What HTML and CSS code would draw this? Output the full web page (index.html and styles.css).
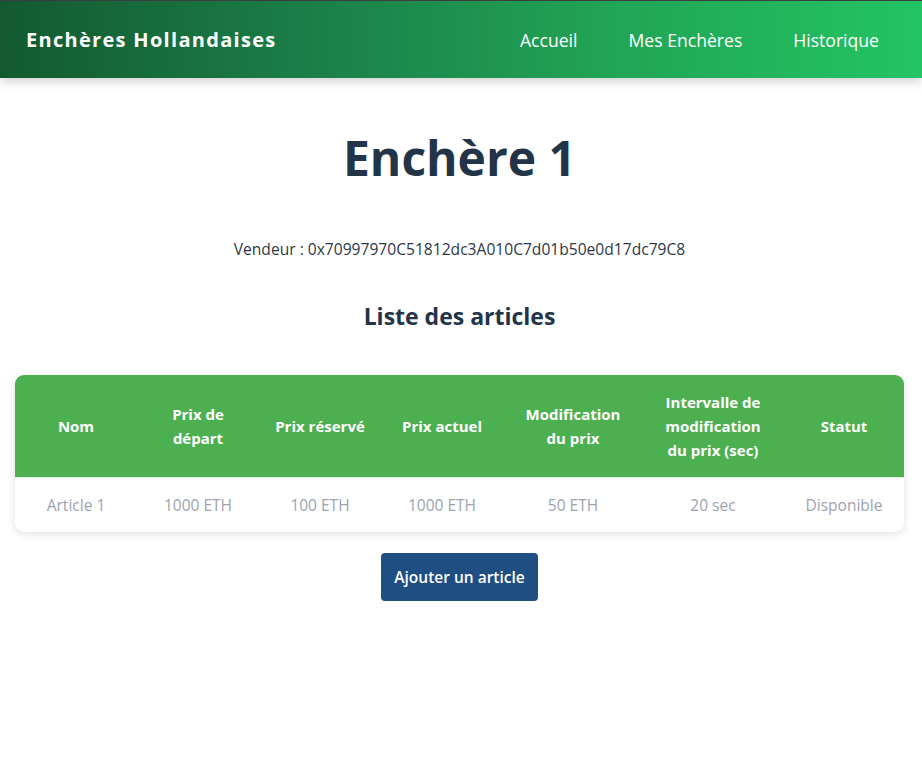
FILE: index.html
```html
<!DOCTYPE html>
<html lang="fr">
<head>
<meta charset="utf-8">
<title>Enchère 1</title>
<link rel="stylesheet" href="styles.css">
</head>
<body>
<header class="navbar">
  <div class="brand">Enchères Hollandaises</div>
  <nav class="links">
    <a href="#">Accueil</a>
    <a href="#">Mes Enchères</a>
    <a href="#">Historique</a>
  </nav>
</header>
<main class="content">
  <h1 class="title">Enchère 1</h1>
  <p class="seller">Vendeur : 0x70997970C51812dc3A010C7d01b50e0d17dc79C8</p>
  <h2 class="subtitle">Liste des articles</h2>
  <div class="table-card">
    <table class="items">
      <colgroup>
        <col class="c-a"><col class="c-a"><col class="c-a"><col class="c-a"><col class="c-b"><col class="c-b"><col class="c-a">
      </colgroup>
      <thead>
        <tr>
          <th>Nom</th>
          <th>Prix de départ</th>
          <th>Prix réservé</th>
          <th>Prix actuel</th>
          <th>Modification du prix</th>
          <th>Intervalle de modification du prix (sec)</th>
          <th>Statut</th>
        </tr>
      </thead>
      <tbody>
        <tr>
          <td>Article 1</td>
          <td>1000 ETH</td>
          <td>100 ETH</td>
          <td>1000 ETH</td>
          <td>50 ETH</td>
          <td>20 sec</td>
          <td>Disponible</td>
        </tr>
      </tbody>
    </table>
  </div>
  <button class="add-btn">Ajouter un article</button>
</main>
</body>
</html>
```

FILE: styles.css
```css
* { box-sizing: border-box; }
html, body { margin: 0; padding: 0; background: #ffffff; }
body {
  font-family: "Open Sans", "Noto Sans", sans-serif;
  color: #2c3e50;
}
.navbar {
  height: 78px;
  border-top: 1px solid #3d3d3d;
  background: linear-gradient(90deg, #135a30 0%, #1b8049 35%, #21a355 65%, #23c463 100%);
  display: flex;
  align-items: center;
  justify-content: space-between;
  padding: 0 43px 0 26px;
  box-shadow: 0 3px 10px rgba(0,0,0,0.2);
  position: relative;
}
.brand {
  color: #ffffff;
  font-weight: 700;
  font-size: 20px;
  letter-spacing: 1.3px;
}
.links { display: flex; gap: 51px; }
.links a {
  color: #ffffff;
  text-decoration: none;
  font-size: 17.6px;
}
.content {
  display: flex;
  flex-direction: column;
  align-items: center;
  padding: 0 18px 0 15px;
}
.title {
  margin: 48px 0 0;
  font-size: 48px;
  font-weight: 700;
  color: #233448;
  line-height: 64px;
}
.seller {
  margin: 47px 0 0;
  font-size: 15.6px;
  color: #2d3748;
  line-height: 24px;
}
.subtitle {
  margin: 39px 0 0;
  font-size: 23px;
  font-weight: 700;
  color: #233448;
  line-height: 32px;
}
.table-card {
  margin-top: 43px;
  width: 889px;
  border-radius: 9px;
  overflow: hidden;
  background: #ffffff;
  box-shadow: 0 2px 10px rgba(0,0,0,0.12);
}
.items {
  width: 100%;
  border-collapse: collapse;
  table-layout: fixed;
}
.c-a { width: 122px; }
.c-b { width: 140px; }
.items th {
  background: #4caf50;
  color: #ffffff;
  font-weight: 700;
  font-size: 15px;
  line-height: 24px;
  padding: 15px 16px;
  height: 102px;
  text-align: center;
  border-bottom: 1px solid #e5e7eb;
}
.items td {
  color: #9ca3af;
  font-size: 15.5px;
  line-height: 24px;
  height: 54px;
  padding: 0 8px;
  text-align: center;
}
.add-btn {
  margin-top: 21px;
  width: 157px;
  height: 48px;
  background: #1f4e82;
  color: #ffffff;
  border: none;
  border-radius: 4px;
  font-family: inherit;
  font-size: 15.5px;
  font-weight: 600;
}
```
